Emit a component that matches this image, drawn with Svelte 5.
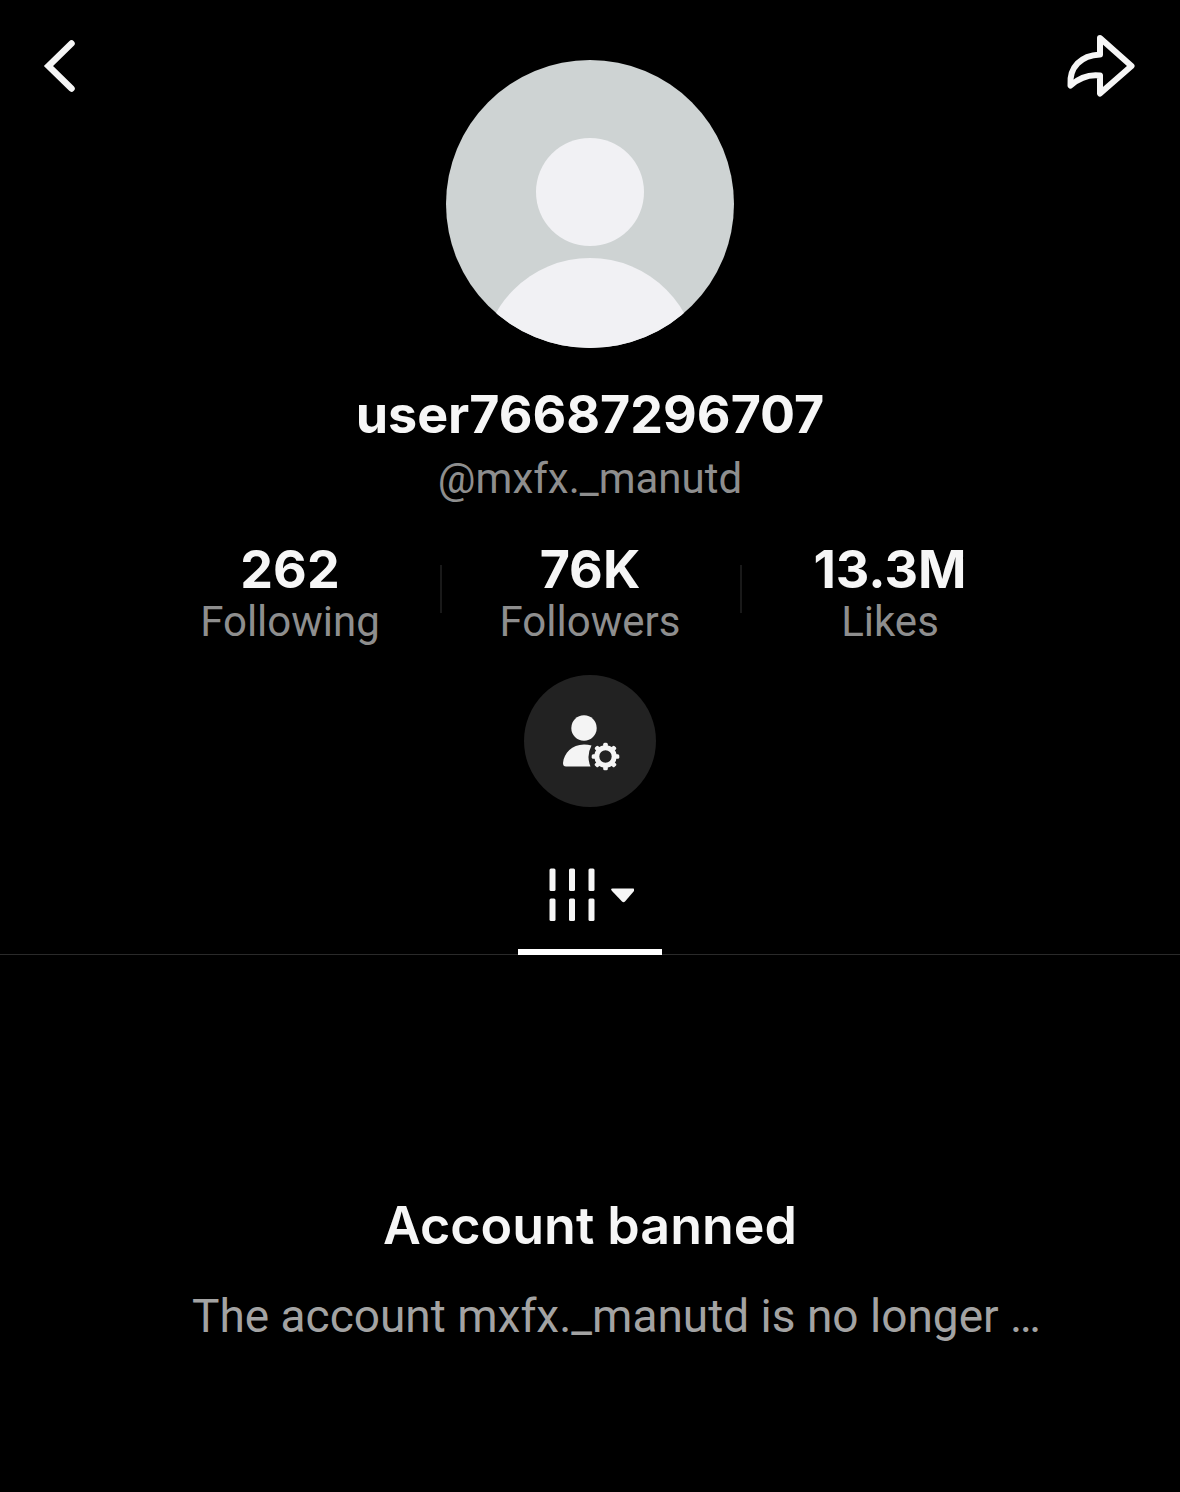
<script lang="ts">
    const name = 'user76687296707';
    const handle = 'mxfx._manutd';

    const stats = [
        { value: '262', label: 'Following' },
        { value: '76K', label: 'Followers' },
        { value: '13.3M', label: 'Likes' }
    ];

    const teeth = [0, 45, 90, 135, 180, 225, 270, 315];
</script>

<main class="page">
    <header class="top">
        <button class="icon-button" aria-label="Back">
            <svg width="36" height="56" viewBox="0 0 36 56">
                <path d="M29.500 5.500 6.500 28l23 22.500" fill="none" stroke="#f6f6f6" stroke-width="6.500" stroke-linecap="round" />
            </svg>
        </button>

        <svg class="avatar" viewBox="0 0 288 288" role="img" aria-label="Profile photo">
            <clipPath id="avatar-clip"><circle cx="144" cy="144" r="144" /></clipPath>
            <g clip-path="url(#avatar-clip)">
                <rect width="288" height="288" fill="#ced3d3" />
                <circle cx="144" cy="132" r="54" fill="#f1f1f4" />
                <circle cx="144" cy="306" r="108" fill="#f1f1f4" />
            </g>
        </svg>

        <button class="icon-button share" aria-label="Share">
            <svg width="72" height="66" viewBox="0 0 72 66">
                <path
                    d="M34 6 65.500 34 34 61.500V43.500C22 42 13 46 4.500 53.500C3 35 15 23.500 34 22.500Z"
                    fill="none"
                    stroke="#f6f6f6"
                    stroke-width="6"
                    stroke-linejoin="round"
                />
            </svg>
        </button>
    </header>

    <section class="profile">
        <h1>{name}</h1>
        <p class="handle">@{handle}</p>

        <ul class="stats">
            {#each stats as stat}
                <li>
                    <strong>{stat.value}</strong>
                    <span>{stat.label}</span>
                </li>
            {/each}
        </ul>

        <button class="manage" aria-label="Manage account">
            <svg width="60" height="60" viewBox="0 0 60 60" fill="#f4f4f4">
                <circle cx="24" cy="17" r="12.700" />
                <path d="M31.500 34.500Q28 33.500 24 33.500C12 33.500 4 42 3 52Q3 55.500 6 55.500H30.500Q26 45 31.500 34.500Z" />
                <g transform="translate(45.500 45.500)">
                    {#each teeth as angle}
                        <rect x="-2.300" y="-13.800" width="4.600" height="6" rx="1.500" transform="rotate({angle})" />
                    {/each}
                    <circle r="8.700" fill="none" stroke="#f4f4f4" stroke-width="5" />
                </g>
            </svg>
        </button>
    </section>

    <nav class="tabs">
        <button class="tab" aria-label="Videos">
            <svg width="88" height="54" viewBox="0 0 88 54" fill="#f6f6f6">
                {#each [3.5, 23, 42.5] as x}
                    <rect {x} y="0.500" width="6" height="22.500" rx="1.500" />
                    <rect {x} y="30.500" width="6" height="22.500" rx="1.500" />
                {/each}
                <path d="M66.500 20.500H87Q89.500 20.500 88 23L79 33.500Q77.500 35 76 33.500L66 23Q64 20.500 66.500 20.500Z" />
            </svg>
        </button>
    </nav>

    <section class="empty">
        <h2>Account banned</h2>
        <p>The account {handle} is no longer …</p>
    </section>
</main>

<style>
    :global(body) {
        margin: 0;
        background: #000;
    }

    .page {
        min-height: 100vh;
        background: #000;
        color: #f6f6f6;
        font-family: Roboto, 'Liberation Sans', sans-serif;
    }

    button {
        padding: 0;
        border: none;
        background: none;
        cursor: pointer;
    }

    svg {
        display: block;
    }

    h1,
    h2,
    p,
    ul {
        margin: 0;
        padding: 0;
    }

    h1,
    h2,
    strong {
        font-family: Inter, Roboto, sans-serif;
        font-size: 52px;
        font-weight: 700;
    }

    .top {
        display: grid;
        grid-template-columns: 1fr 288px 1fr;
        align-items: start;
        padding: 32px 42px 0;
    }

    .icon-button {
        justify-self: start;
        padding-top: 6px;
    }

    .share {
        justify-self: end;
        padding-top: 0;
    }

    .avatar {
        width: 288px;
        height: 288px;
        margin-top: 28px;
    }

    .profile {
        display: flex;
        flex-direction: column;
        align-items: center;
        padding-top: 35px;
    }

    h1 {
        line-height: 64px;
    }

    .handle {
        margin-top: 4px;
        color: #8e8e8e;
        font-size: 42px;
        line-height: 56px;
    }

    .stats {
        display: flex;
        margin-top: 39px;
        list-style: none;
    }

    .stats li {
        position: relative;
        display: flex;
        flex-direction: column;
        align-items: center;
        width: 300px;
    }

    .stats li + li::before {
        content: '';
        position: absolute;
        top: 19px;
        left: 0;
        width: 2px;
        height: 48px;
        background: #191919;
    }

    .stats strong {
        line-height: 48px;
    }

    .stats span {
        color: #8e8e8e;
        font-size: 42px;
        line-height: 56px;
    }

    .manage {
        display: flex;
        align-items: center;
        justify-content: center;
        width: 132px;
        height: 132px;
        margin-top: 25px;
        border-radius: 50%;
        background: #222;
    }

    .tabs {
        display: flex;
        justify-content: center;
        margin-top: 61px;
        box-shadow: inset 0 -1px #2a2a2a;
    }

    .tab {
        display: flex;
        justify-content: center;
        width: 144px;
        padding-bottom: 27px;
        border-bottom: 6px solid #fff;
    }

    .empty {
        padding-top: 239px;
    }

    h2 {
        font-weight: 600;
        line-height: 64px;
        text-align: center;
    }

    .empty p {
        margin-top: 30px;
        padding: 0 128px 0 192px;
        color: #a3a3a3;
        font-size: 46px;
        line-height: 56px;
        white-space: nowrap;
    }
</style>
